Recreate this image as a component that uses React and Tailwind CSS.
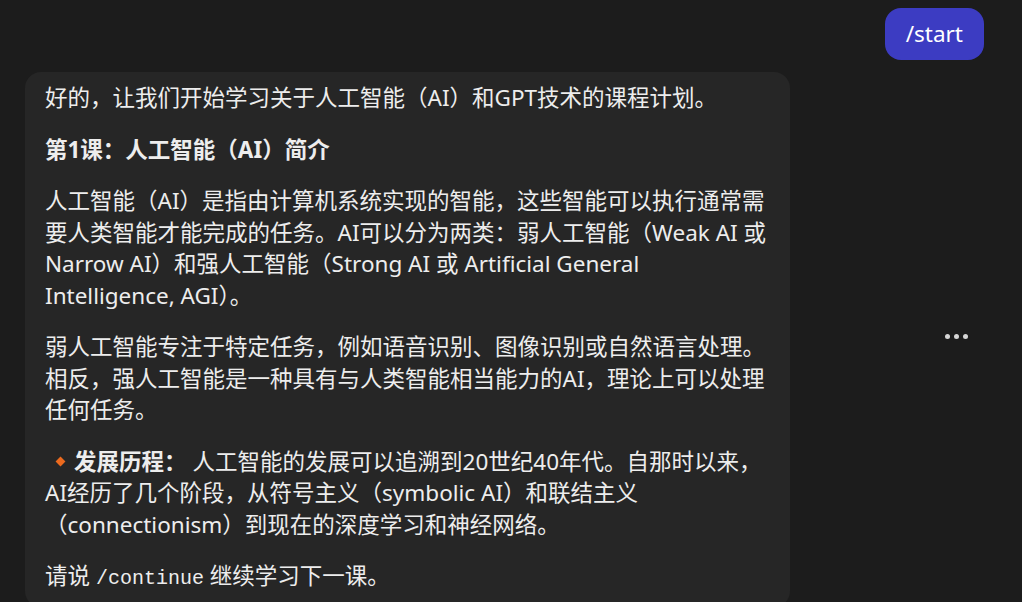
import React from 'react';

const Diamond = () => (
  <span className="inline-block w-[7px] h-[7px] bg-[#ec6a1e] rotate-45 ml-[12px] mr-[10px] align-middle relative -top-[2px]" />
);

const App = () => {
  return (
    <div
      className="w-[1022px] h-[602px] overflow-hidden bg-[#1c1c1c] text-[#ededed] flex flex-col"
      style={{ fontFamily: '"Noto Sans", "Noto Sans CJK SC", sans-serif' }}
    >
      {/* User message */}
      <div className="flex justify-end pt-[8px] pr-[38px]">
        <button className="h-[52px] px-[21px] rounded-[16px] bg-[#3c3cc2] text-white text-[22.5px] leading-none">
          /start
        </button>
      </div>

      {/* Assistant message */}
      <div className="flex items-center pl-[25px] mt-[12px]">
        <div className="w-[765px] flex-shrink-0 bg-[#262626] rounded-[16px] px-[20px] pt-[10px] pb-[12px] text-[22.5px] leading-[31.5px] flex flex-col gap-[20px]">
          <p>好的，让我们开始学习关于人工智能（AI）和GPT技术的课程计划。</p>
          <p className="font-bold">第1课：人工智能（AI）简介</p>
          <p>
            人工智能（AI）是指由计算机系统实现的智能，这些智能可以执行通常需<br />
            要人类智能才能完成的任务。AI可以分为两类：弱人工智能（Weak AI 或<br />
            Narrow AI）和强人工智能（Strong AI 或 Artificial General<br />
            Intelligence, AGI）。
          </p>
          <p>
            弱人工智能专注于特定任务，例如语音识别、图像识别或自然语言处理。<br />
            相反，强人工智能是一种具有与人类智能相当能力的AI，理论上可以处理<br />
            任何任务。
          </p>
          <p>
            <Diamond />
            <span className="font-bold">发展历程：</span>
            <span className="ml-[6px]">人工智能的发展可以追溯到20世纪40年代。自那时以来，</span><br />
            AI经历了几个阶段，从符号主义（symbolic AI）和联结主义<br />
            （connectionism）到现在的深度学习和神经网络。
          </p>
          <p>
            请说{' '}
            <code className="text-[20px]" style={{ fontFamily: '"Liberation Mono", monospace' }}>/continue</code>{' '}
            继续学习下一课。
          </p>
        </div>

        {/* More */}
        <div className="ml-[155px] mb-[6px] flex items-center gap-[4px]">
          <span className="w-[5px] h-[5px] rounded-full bg-[#d6d6d6]" />
          <span className="w-[5px] h-[5px] rounded-full bg-[#d6d6d6]" />
          <span className="w-[5px] h-[5px] rounded-full bg-[#d6d6d6]" />
        </div>
      </div>
    </div>
  );
};

export default App;
